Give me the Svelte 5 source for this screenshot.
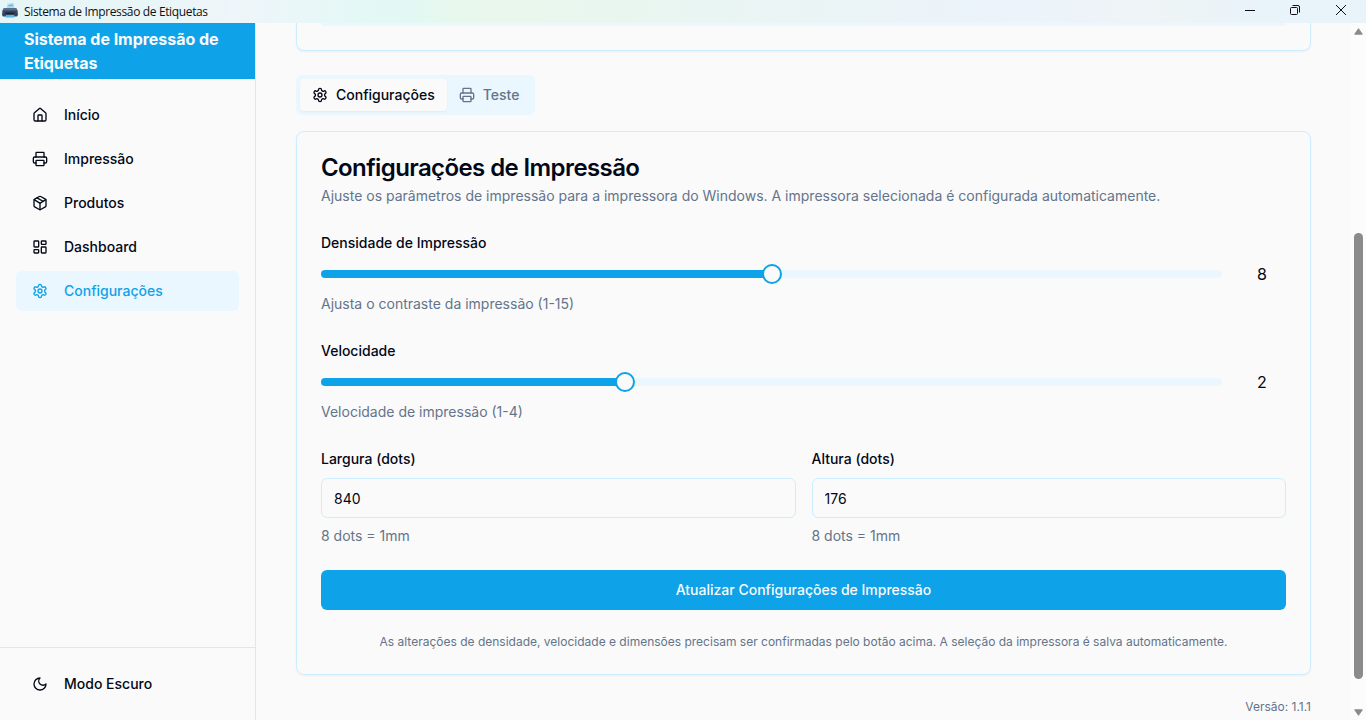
<script>
  const nav = [
    { label: 'Início', icon: 'home' },
    { label: 'Impressão', icon: 'printer' },
    { label: 'Produtos', icon: 'package' },
    { label: 'Dashboard', icon: 'dashboard' },
    { label: 'Configurações', icon: 'settings', active: true }
  ];
  const tabs = [
    { label: 'Configurações', icon: 'settings', active: true },
    { label: 'Teste', icon: 'printer' }
  ];
  const sliders = [
    { label: 'Densidade de Impressão', help: 'Ajusta o contraste da impressão (1-15)', min: 1, max: 15, value: 8 },
    { label: 'Velocidade', help: 'Velocidade de impressão (1-4)', min: 1, max: 4, value: 2 }
  ];
  const fields = [
    { id: 'width', label: 'Largura (dots)', value: '840' },
    { id: 'height', label: 'Altura (dots)', value: '176' }
  ];
  const ratio = (s) => (s.value - s.min) / (s.max - s.min);
</script>

{#snippet icon(name)}
  <svg class="icon" viewBox="0 0 24 24" fill="none" stroke="currentColor" stroke-width="2" stroke-linecap="round" stroke-linejoin="round">
    {#if name === 'home'}
      <path d="M15 21v-8a1 1 0 0 0-1-1h-4a1 1 0 0 0-1 1v8" />
      <path d="M3 10a2 2 0 0 1 .709-1.528l7-5.999a2 2 0 0 1 2.582 0l7 5.999A2 2 0 0 1 21 10v9a2 2 0 0 1-2 2H5a2 2 0 0 1-2-2z" />
    {:else if name === 'printer'}
      <path d="M6 18H4a2 2 0 0 1-2-2v-5a2 2 0 0 1 2-2h16a2 2 0 0 1 2 2v5a2 2 0 0 1-2 2h-2" />
      <path d="M6 9V3a1 1 0 0 1 1-1h10a1 1 0 0 1 1 1v6" />
      <rect x="6" y="14" width="12" height="8" rx="1" />
    {:else if name === 'package'}
      <path d="M11 21.73a2 2 0 0 0 2 0l7-4A2 2 0 0 0 21 16V8a2 2 0 0 0-1-1.73l-7-4a2 2 0 0 0-2 0l-7 4A2 2 0 0 0 3 8v8a2 2 0 0 0 1 1.73z" />
      <path d="M12 22V12" />
      <path d="m3.3 7 7.703 4.734a2 2 0 0 0 1.994 0L20.7 7" />
      <path d="m7.5 4.27 9 5.15" />
    {:else if name === 'dashboard'}
      <rect x="3" y="3" width="7" height="9" rx="1" />
      <rect x="14" y="3" width="7" height="5" rx="1" />
      <rect x="14" y="12" width="7" height="9" rx="1" />
      <rect x="3" y="16" width="7" height="5" rx="1" />
    {:else if name === 'settings'}
      <path d="M12.22 2h-.44a2 2 0 0 0-2 2v.18a2 2 0 0 1-1 1.73l-.43.25a2 2 0 0 1-2 0l-.15-.08a2 2 0 0 0-2.73.73l-.22.38a2 2 0 0 0 .73 2.73l.15.1a2 2 0 0 1 1 1.72v.51a2 2 0 0 1-1 1.74l-.15.09a2 2 0 0 0-.73 2.73l.22.38a2 2 0 0 0 2.73.73l.15-.08a2 2 0 0 1 2 0l.43.25a2 2 0 0 1 1 1.73V20a2 2 0 0 0 2 2h.44a2 2 0 0 0 2-2v-.18a2 2 0 0 1 1-1.73l.43-.25a2 2 0 0 1 2 0l.15.08a2 2 0 0 0 2.73-.73l.22-.39a2 2 0 0 0-.73-2.73l-.15-.08a2 2 0 0 1-1-1.74v-.5a2 2 0 0 1 1-1.74l.15-.09a2 2 0 0 0 .73-2.73l-.22-.38a2 2 0 0 0-2.73-.73l-.15.08a2 2 0 0 1-2 0l-.43-.25a2 2 0 0 1-1-1.73V4a2 2 0 0 0-2-2z" />
      <circle cx="12" cy="12" r="3" />
    {:else if name === 'moon'}
      <path d="M12 3a6 6 0 0 0 9 9 9 9 0 1 1-9-9Z" />
    {/if}
  </svg>
{/snippet}

<div class="window">
  <header class="titlebar">
    <svg class="logo" width="16" height="16" viewBox="0 0 16 16">
      <path d="M5.500.800 11.500 0 12.500 5.500H4.500z" fill="#a9dcf7" />
      <path d="M6.500 2.800 11 2" stroke="#5aaee0" stroke-width="1" />
      <path d="M2 5h12l1.500 2.500L16 12l-1 1.500H1L0 12l.5-4.500z" fill="#34465f" />
      <path d="M2 5h12l1.500 2.500H.5z" fill="#5a6f8a" />
      <path d="M3.500 9.500h9v1.500h-9z" fill="#17253a" />
      <path d="M4 12h8l.5 2.500h-9z" fill="#58b7e8" />
    </svg>
    <span class="title">Sistema de Impressão de Etiquetas</span>
    <div class="controls">
      <svg width="10" height="10" viewBox="0 0 10 10"><path d="M0 5.500h10" /></svg>
      <svg width="10" height="10" viewBox="0 0 10 10"><rect x=".5" y="2.500" width="7" height="7" rx="1" /><path d="M2.500.5H8a1.500 1.500 0 0 1 1.500 1.500v5.500" /></svg>
      <svg width="10" height="10" viewBox="0 0 10 10"><path d="m0 0 10 10M10 0 0 10" /></svg>
    </div>
  </header>

  <div class="body">
    <aside>
      <div class="brand">Sistema de Impressão de Etiquetas</div>
      <nav>
        {#each nav as item}
          <a class="nav-item" class:active={item.active}>{@render icon(item.icon)}<span>{item.label}</span></a>
        {/each}
      </nav>
      <div class="theme">
        <a class="nav-item">{@render icon('moon')}<span>Modo Escuro</span></a>
      </div>
    </aside>

    <main>
      <section class="card previous"><div class="panel"></div></section>

      <div class="tabs">
        {#each tabs as tab}
          <div class="tab" class:selected={tab.active}>{@render icon(tab.icon)}<span>{tab.label}</span></div>
        {/each}
      </div>

      <section class="card settings">
        <h2>Configurações de Impressão</h2>
        <p class="lead">Ajuste os parâmetros de impressão para a impressora do Windows. A impressora selecionada é configurada automaticamente.</p>

        {#each sliders as s}
          <div class="group">
            <div class="label">{s.label}</div>
            <div class="slider-row">
              <div class="slider">
                <div class="track"><div class="range" style="width: {ratio(s) * 100}%"></div></div>
                <div class="thumb" style="left: calc({ratio(s) * 100}% + {10 - ratio(s) * 20}px)"></div>
              </div>
              <span class="value">{s.value}</span>
            </div>
            <p class="help">{s.help}</p>
          </div>
        {/each}

        <div class="fields">
          {#each fields as f}
            <div class="group">
              <label class="label" for={f.id}>{f.label}</label>
              <input id={f.id} value={f.value} />
              <p class="help">8 dots = 1mm</p>
            </div>
          {/each}
        </div>

        <button>Atualizar Configurações de Impressão</button>
        <p class="note">As alterações de densidade, velocidade e dimensões precisam ser confirmadas pelo botão acima. A seleção da impressora é salva automaticamente.</p>
      </section>
      <div class="version">Versão: 1.1.1</div>
    </main>

    <div class="scrollbar">
      <svg width="9" height="7" viewBox="0 0 9 7"><path d="M4.500.7 8.300 6.200H.7z" /></svg>
      <div class="rail"><div class="handle"></div></div>
      <svg width="9" height="7" viewBox="0 0 9 7"><path d="M4.500 6.300.7.8h7.600z" /></svg>
    </div>
  </div>
</div>

<style>
  :global(body) { margin: 0; overflow: hidden; }
  * { box-sizing: border-box; }
  .window { width: 1366px; height: 720px; display: flex; flex-direction: column; background: #fafafa; color: #020817; font: 14px/20px Inter, sans-serif; overflow: hidden; }
  p, h2 { margin: 0; }
  .titlebar { height: 23px; flex: none; display: flex; align-items: center; padding: 0 20px 0 2px; background: linear-gradient(90deg, #e6f5f6 0%, #e9f6f8 12%, #eff5fa 17%, #e4f8f6 26%, #e3f8f4 30%, #e9f8ec 34%, #e9f6f0 46%, #ecf3fb 73%, #eef4f6 86%, #e9f3fa 92%, #e9f3fa 100%); }
  .logo { margin: 0 6px 1px 0; flex: none; }
  .title { font: 12px/16px "Open Sans", sans-serif; letter-spacing: -.36px; color: #111; flex: 1; white-space: nowrap; }
  .controls { display: flex; gap: 36px; margin-bottom: 3px; }
  .controls svg { fill: none; stroke: #111; stroke-width: 1; overflow: visible; }
  .controls svg:first-child { margin-right: -1px; }
  .body { flex: 1; min-height: 0; display: flex; }
  aside { width: 256px; flex: none; border-right: 1px solid #cceeff; display: flex; flex-direction: column; }
  .brand { height: 56px; padding: 4px 24px; background: #0ea2e9; color: #fafafa; font-size: 16px; line-height: 24px; font-weight: 700; letter-spacing: -.04px; }
  nav { flex: 1; padding: 16px; display: flex; flex-direction: column; gap: 4px; }
  .nav-item { height: 40px; display: flex; align-items: center; gap: 16px; padding: 0 16px; border-radius: 6px; font-weight: 500; }
  .nav-item.active { background: #ebf7ff; color: #0ea2e9; }
  .icon { width: 16px; height: 16px; flex: none; }
  .theme { height: 73px; padding: 16px; border-top: 1px solid #cceeff; }
  main { flex: 1; min-width: 0; padding: 0 40px; display: flex; flex-direction: column; }
  .card { border: 1px solid #cceeff; border-radius: 8px; box-shadow: 0 1px 2px rgba(0, 0, 0, .05); flex: none; }
  .previous { height: 28px; border-top: 0; border-radius: 0 0 8px 8px; padding: 0 24px; }
  .panel { height: 3px; background: #ebf7ff; border-radius: 0 0 6px 6px; }
  .tabs { align-self: flex-start; height: 40px; margin: 24px 0 16px; padding: 4px; display: flex; border-radius: 6px; background: #ebf7ff; }
  .tab { height: 32px; display: flex; align-items: center; gap: 8px; padding: 0 12px; border-radius: 4px; font-weight: 500; color: #64748b; }
  .selected { background: #fafafa; color: #020817; box-shadow: 0 1px 2px rgba(0, 0, 0, .05); }
  .settings { height: 544px; padding: 24px; display: flex; flex-direction: column; }
  h2 { font-size: 24px; line-height: 24px; font-weight: 600; letter-spacing: -.6px; }
  .lead { margin: 6px 0 27px; color: #64748b; }
  .group { display: flex; flex-direction: column; }
  .settings > .group { height: 84px; margin-bottom: 24px; }
  .label { font-weight: 500; line-height: 14px; padding: 3px 0; }
  .slider-row { display: flex; align-items: center; gap: 16px; height: 24px; margin: 9px 0 8px; }
  .slider { position: relative; flex: 1; height: 20px; display: flex; align-items: center; }
  .track { flex: 1; height: 8px; border-radius: 4px; background: #ebf7ff; overflow: hidden; }
  .range { height: 100%; background: #0ea2e9; }
  .thumb { position: absolute; top: 0; width: 20px; height: 20px; margin-left: -10px; border: 2px solid #0ea2e9; border-radius: 50%; background: #fafafa; }
  .value { width: 48px; text-align: center; font-size: 16px; line-height: 24px; }
  .help { color: #64748b; }
  .fields { display: grid; grid-template-columns: 1fr 1fr; gap: 16px; margin-bottom: 24px; }
  input { width: 100%; height: 40px; margin: 9px 0 8px; padding: 0 12px; border: 1px solid #cceeff; border-radius: 6px; background: #fafafa; color: #020817; font: 14px/20px Inter, sans-serif; }
  button { height: 40px; flex: none; border: 0; border-radius: 6px; background: #0ea2e9; color: #fafafa; font: 500 14px/20px Inter, sans-serif; }
  .note { margin-top: 24px; text-align: center; font-size: 12px; line-height: 16px; color: #64748b; }
  .version { margin-top: 24px; text-align: right; font-size: 12px; line-height: 16px; color: #64748b; }
  .scrollbar { width: 15px; flex: none; padding: 5px 3px 4px 3px; background: #fcfcfc; display: flex; flex-direction: column; align-items: center; }
  .scrollbar svg { fill: #8b8b8b; stroke: #8b8b8b; stroke-linejoin: round; }
  .rail { flex: 1; padding-top: 198px; }
  .handle { width: 9px; height: 446px; border-radius: 5px; background: #8b8b8b; }
</style>
